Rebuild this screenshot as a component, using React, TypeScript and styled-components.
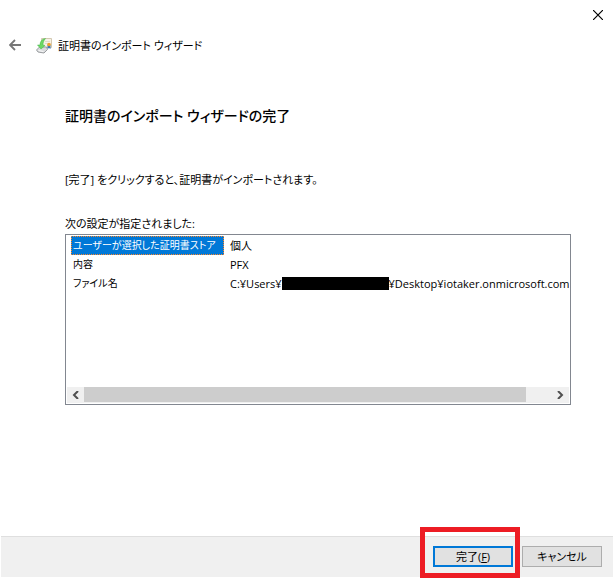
import React from "react";
import styled, { createGlobalStyle } from "styled-components";

const GlobalStyle = createGlobalStyle`
  *, *::before, *::after { box-sizing: border-box; }
  html, body { margin: 0; padding: 0; background: #fff; }
  body, button, table {
    font-family: "Open Sans", "Noto Sans CJK JP", sans-serif;
    font-size: 11px;
    line-height: 19px;
    font-feature-settings: "palt";
    color: #000;
  }
`;

const Wizard = styled.main`
  display: flex;
  flex-direction: column;
  min-height: 100vh;
  padding: 0 1px 1px;
`;

const CaptionBar = styled.div`
  display: flex;
  justify-content: flex-end;
  height: 32px;
`;

const IconButton = styled.button`
  display: flex;
  align-items: center;
  justify-content: center;
  padding: 0;
  border: 0;
  background: transparent;
`;

const CloseButton = styled(IconButton)`
  width: 30px;
  height: 30px;
`;

const BackButton = styled(IconButton)`
  width: 28px;
  height: 26px;
`;

const TitleBar = styled.header`
  display: flex;
  align-items: center;
  height: 26px;
`;

const TitleIcon = styled.svg`
  flex: none;
  margin: 0 5px 0 7px;
`;

const Title = styled.span`
  white-space: nowrap;
`;

const Content = styled.section`
  display: flex;
  flex-direction: column;
  flex: 1;
  padding: 46px 42px 0 64px;
`;

const Heading = styled.h1`
  margin: 0 0 42px;
  font-size: 14px;
  line-height: 24px;
  font-weight: 500;
`;

const Paragraph = styled.p`
  margin: 0;
`;

const ListLabel = styled.p`
  margin: 25px 0 1px;
`;

const ListBox = styled.div`
  display: flex;
  flex-direction: column;
  justify-content: space-between;
  height: 171px;
  padding: 1px 1px 1px;
  border: 1px solid #828790;
  background: #fff;
`;

const TableClip = styled.div`
  overflow: hidden;
`;

const Settings = styled.table`
  width: 100%;
  border-collapse: collapse;
  table-layout: fixed;
`;

const NameCell = styled.th<{ $selected?: boolean }>`
  width: 157px;
  height: 19px;
  padding: 0 0 0 4px;
  font-size: 10px;
  font-weight: 400;
  text-align: left;
  white-space: nowrap;
  line-height: 19px;
  color: ${(p) => (p.$selected ? "#fff" : "#000")};
`;

const NameText = styled.span<{ $selected?: boolean }>`
  display: block;
  width: 153px;
  height: 19px;
  padding-left: 1px;
  line-height: 17px;
  border: 1px ${(p) => (p.$selected ? "dotted #ff8728" : "solid transparent")};
  background: ${(p) => (p.$selected ? "#0078d7" : "transparent")};
`;

const ValueCell = styled.td`
  height: 19px;
  padding: 0 0 0 6px;
  white-space: nowrap;
`;

const Redacted = styled.span`
  display: inline-block;
  width: 107px;
  height: 13px;
  vertical-align: -2px;
  background: #000;
`;

const ScrollBar = styled.div`
  display: flex;
  height: 16px;
  padding-bottom: 1px;
  background: #f0f0f0;
`;

const ScrollButton = styled(IconButton)`
  flex: none;
  width: 17px;
  height: 15px;
`;

const ScrollTrack = styled.div`
  flex: 1;
`;

const ScrollThumb = styled.div`
  width: 94.5%;
  height: 15px;
  background: #cdcdcd;
`;

const Footer = styled.footer`
  display: flex;
  align-items: flex-start;
  justify-content: flex-end;
  gap: 9px;
  height: 41px;
  padding: 9px 11px 0;
  border-top: 1px solid #dfdfdf;
  background: #f0f0f0;
`;

const Highlighted = styled.div`
  position: relative;
`;

const HighlightFrame = styled.div`
  position: absolute;
  inset: -19px -7px -11px -13px;
  border: 5px solid #ed1c24;
  pointer-events: none;
`;

const PushButton = styled.button<{ $primary?: boolean }>`
  display: flex;
  align-items: center;
  justify-content: center;
  width: 80px;
  height: 21px;
  padding: 0;
  border: ${(p) => (p.$primary ? "2px solid #0078d7" : "1px solid #adadad")};
  background: #e1e1e1;
  white-space: nowrap;
`;

const settings = [
  { name: "ユーザーが選択した証明書ストア", value: "個人", selected: true },
  { name: "内容", value: "PFX" },
  {
    name: "ファイル名",
    value: (
      <>
        C:¥Users¥
        <Redacted />
        ¥Desktop¥iotaker.onmicrosoft.com
      </>
    ),
  },
];

function CertificateIcon() {
  return (
    <TitleIcon width="17" height="17" viewBox="0 0 17 17" aria-hidden="true">
      <path d="M5.500 1.500h10v9h-10z" fill="#f6f1e6" stroke="#d3c8b0" />
      <path d="M9 4.500h5M9 6.500h3" stroke="#e0dacb" />
      <path d="M11.500 8v4l1.500-1 1.500 1V8z" fill="#3d78b8" />
      <circle cx="13" cy="7.500" r="1.800" fill="#eda02c" />
      <path d="M.5 13l3-3h7l1 2.500-3.500 3.500-6-1z" fill="#d9dbdd" stroke="#9a9da0" />
      <path d="M2.500 13.500l5 1" stroke="#fafafa" />
      <path d="M9.500 1.500C6 2 4 4.500 4 8H1.500L5 12l4-3.500-2-.5c0-2.500.5-4 2.500-6.500z" fill="#6bd863" stroke="#43b548" strokeWidth=".5" />
    </TitleIcon>
  );
}

function Chevron({ d }: { d: string }) {
  return (
    <svg width="7" height="8" viewBox="0 0 7 8" aria-hidden="true">
      <path d={d} fill="none" stroke="#505050" strokeWidth="2" />
    </svg>
  );
}

export default function App() {
  return (
    <>
      <GlobalStyle />
      <Wizard>
        <CaptionBar>
          <CloseButton type="button" aria-label="閉じる">
            <svg width="10" height="10" viewBox="0 0 10 10" aria-hidden="true">
              <path d="M0 0l10 10M10 0L0 10" stroke="#000" strokeWidth="1.200" />
            </svg>
          </CloseButton>
        </CaptionBar>
        <TitleBar>
          <BackButton type="button" aria-label="戻る">
            <svg width="12" height="12" viewBox="0 0 12 12" aria-hidden="true">
              <path d="M12 6H1M6 1L1 6l5 5" fill="none" stroke="#777" strokeWidth="1.800" />
            </svg>
          </BackButton>
          <CertificateIcon />
          <Title>証明書のインポート ウィザード</Title>
        </TitleBar>
        <Content>
          <Heading>証明書のインポート ウィザードの完了</Heading>
          <Paragraph>[完了] をクリックすると、証明書がインポートされます。</Paragraph>
          <ListLabel id="settings-label">次の設定が指定されました:</ListLabel>
          <ListBox>
            <TableClip>
              <Settings aria-labelledby="settings-label">
                <tbody>
                  {settings.map((s) => (
                    <tr key={s.name}>
                      <NameCell scope="row" $selected={s.selected}>
                        <NameText $selected={s.selected}>{s.name}</NameText>
                      </NameCell>
                      <ValueCell>{s.value}</ValueCell>
                    </tr>
                  ))}
                </tbody>
              </Settings>
            </TableClip>
            <ScrollBar>
              <ScrollButton type="button" aria-label="左へスクロール">
                <Chevron d="M6 0L2 4l4 4" />
              </ScrollButton>
              <ScrollTrack>
                <ScrollThumb />
              </ScrollTrack>
              <ScrollButton type="button" aria-label="右へスクロール">
                <Chevron d="M1 0l4 4-4 4" />
              </ScrollButton>
            </ScrollBar>
          </ListBox>
        </Content>
        <Footer>
          <Highlighted>
            <PushButton type="button" $primary>
              <span>
                完了(<u>F</u>)
              </span>
            </PushButton>
            <HighlightFrame />
          </Highlighted>
          <PushButton type="button">キャンセル</PushButton>
        </Footer>
      </Wizard>
    </>
  );
}
